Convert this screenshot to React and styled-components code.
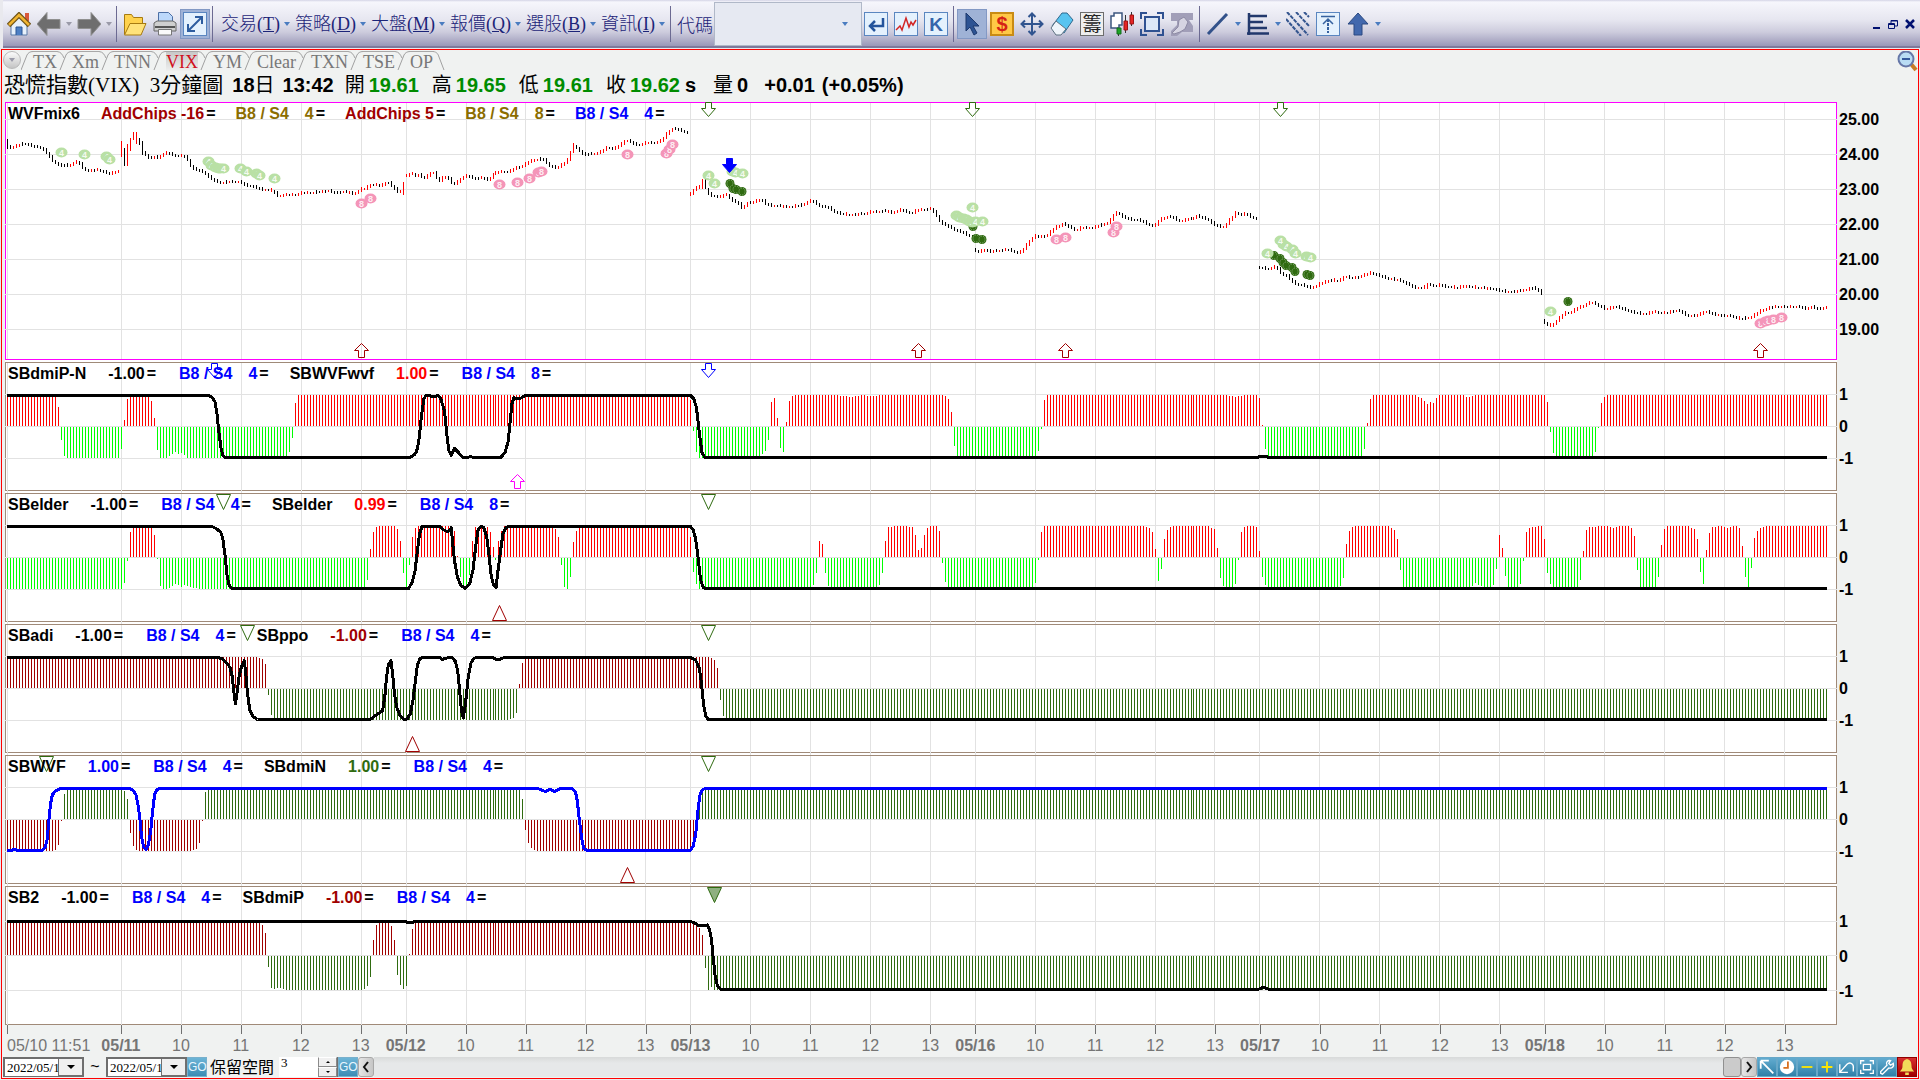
import React from "react";
import styled, { createGlobalStyle } from "styled-components";

const GlobalStyle = createGlobalStyle`
    * {
        box-sizing: border-box;
    }
    body {
        margin: 0;
        background: #e9e9ee;
        font-family: "Liberation Sans", "Noto Sans CJK TC", sans-serif;
    }
    button, input, select {
        margin: 0;
        padding: 0;
        border: 0;
        border-radius: 0;
        background: none;
        color: inherit;
        font: inherit;
    }
`

const RED = "#ff0000";
const LIME = "#00ff00";
const MAROON = "#a00000";
const FOREST = "#2f6b10";
const BLUE = "#0000ff";
const GOLD = "#8b6d00";
const GRID = "#e2e2e2";

/* ---------- toolbar ---------- */

const Toolbar = styled.header`
    display: flex;
    align-items: center;
    height: 48px;
    margin-left: 3px;
    padding-left: 4px;
    padding-right: 5px;
    background: linear-gradient(#d4d4e6 0, #f6f6fc 2px, #e6e6f0 20px, #cdccdd 32px, #9a98b8 46px, #7d7a9c 46px, #7d7a9c 48px);
`
const Separator = styled.div`
    width: 1px;
    height: 36px;
    margin: 0 6px 0 5px;
    background: #6c6a92;
`
const IconGroup = styled.div`
    display: flex;
    align-items: center;
    gap: 6px;
`
const IconButton = styled.button`
    display: flex;
    align-items: center;
    justify-content: center;
    width: ${props => props.$active ? 30 : 24}px;
    height: ${props => props.$active ? 30 : 24}px;
    margin: 0 ${props => props.$active ? -3 : 0}px;
    background: ${props => props.$active ? "#9fb2d6" : "none"};
    border: ${props => props.$active ? "1px solid #8298c4" : "0"};
`
const DropButton = styled.button`
    display: flex;
    justify-content: center;
    width: 16px;
    margin: 0 -6px;
`
const Caret = styled.span`
    border: 3px solid transparent;
    border-top: 4px solid ${props => props.$muted ? "#9a9aa8" : "#4a7cc0"};
    border-bottom: 0;
`
const Menus = styled.nav`
    display: flex;
    align-items: center;
    gap: 5px;
    margin-left: 2px;
`
const MenuButton = styled.button`
    display: flex;
    align-items: center;
    gap: 4px;
    color: #1c2478;
    font-family: "Liberation Serif", "Noto Sans CJK TC", serif;
    font-weight: 300;
    font-size: 18px;
    line-height: 24px;
    white-space: nowrap;
`
const CodeLabel = styled.label`
    color: #1c2478;
    font-family: "Noto Sans CJK TC", sans-serif;
    font-weight: 300;
    font-size: 18px;
    line-height: 24px;
    white-space: nowrap;
`
const CodeBox = styled.div`
    display: flex;
    align-items: center;
    width: 148px;
    height: 44px;
    margin: 0 2px 0 1px;
    padding-right: 14px;
    background: #e6e9f2;
    border: 1px solid #b0b8c8;
    input {
        flex: 1;
        min-width: 0;
        padding-left: 4px;
        font-size: 18px;
    }
`
const WindowButtons = styled.div`
    display: flex;
    align-items: center;
    gap: 7px;
    margin-left: auto;
    button {
        display: flex;
    }
`

/* ---------- chart window ---------- */

const Frame = styled.main`
    margin: 1px;
    border: 1px solid #ff0000;
    background: #f0f2f1;
`
const TabRow = styled.div`
    display: flex;
    align-items: flex-start;
    height: 21px;
    padding-left: 1px;
`
const TabMenu = styled.button`
    display: flex;
    align-items: center;
    justify-content: center;
    width: 18px;
    height: 18px;
    margin-top: 1px;
    border: 1px solid #b8b8b8;
    border-radius: 50%;
    background: linear-gradient(#fbfbfb, #c4c4c4);
`
const Tab = styled.button`
    height: 20px;
    margin-top: 1px;
    border-top: 1px solid #a8a8a8;
    background: ${props => props.$active ? "linear-gradient(#c8c8c8, #eeefee)" : "none"};
    color: ${props => props.$active ? "#d01020" : "#787878"};
    font-family: "Liberation Serif", serif;
    font-size: 18px;
    line-height: 20px;
`
const TabEdge = styled.svg`
    width: ${props => props.$first ? 12 : 15}px;
    height: 19px;
    margin-top: 1px;
`
const ZoomOut = styled.button`
    margin: 1px 0 0 auto;
    width: 21px;
    height: 21px;
`
const TitleRow = styled.div`
    display: flex;
    align-items: flex-start;
    height: 31px;
    padding-left: 2px;
    font-weight: bold;
    font-size: 20px;
    line-height: 29px;
    white-space: nowrap;
`
const Instrument = styled.h1`
    margin: 0 9px 0 0;
    font-family: "Liberation Serif", "Noto Sans CJK TC", serif;
    font-weight: normal;
    font-size: 21px;
    line-height: 29px;
`
const Stamp = styled.span`
    margin-right: ${props => props.$gap || 11}px;
    span {
        font-weight: normal;
    }
`
const Quote = styled.span`
    margin-right: ${props => props.$gap || 13}px;
    color: ${props => props.$color || "#008c00"};
    span {
        margin-right: 4px;
        color: #000000;
        font-weight: normal;
    }
`
const Charts = styled.div`
    padding-left: 3px;
`
const ChartRow = styled.section`
    display: grid;
    grid-template-columns: minmax(0, 1fr) 81px;
`
const PlotCell = styled.div`
    padding-bottom: ${props => props.$last ? 0 : 2}px;
    background: #ffffff;
`
const Plot = styled.div`
    display: grid;
    border: 1px solid ${props => props.$color};
`
const Drawing = styled.svg`
    grid-area: 1 / 1;
    display: block;
    width: 100%;
    height: ${props => props.$height}px;
    overflow: visible;
`
const Legend = styled.div`
    grid-area: 1 / 1;
    z-index: 1;
    display: flex;
    align-self: start;
    padding-left: 2px;
    font-weight: bold;
    font-size: 16px;
    line-height: 21px;
    white-space: nowrap;
`
const LegendText = styled.span`
    margin-right: ${props => props.$gap}px;
    color: ${props => props.$color || "#000000"};
`
const Equals = styled.span`
    margin-left: 2px;
    color: #000000;
`
const Scale = styled.div`
    padding: ${props => props.$top}px 0 0 2px;
    font-weight: bold;
    font-size: 16px;
    div {
        height: ${props => props.$step}px;
        line-height: ${props => props.$step}px;
    }
`
const TimeAxis = styled.div`
    display: flex;
    height: 32px;
    margin: 0 81px 0 2px;
    color: #757575;
    font-size: 16px;
`
const TimeSlot = styled.div`
    display: flex;
    flex-direction: column;
    flex: ${props => props.$bars} 1 0;
    min-width: 0;
    &:before {
        content: "";
        width: 1px;
        height: 9px;
        background: #707070;
    }
    span {
        display: flex;
        justify-content: ${props => props.$start ? "flex-start" : "center"};
        width: 0;
        line-height: 23px;
        white-space: nowrap;
        font-weight: ${props => props.$bold ? "bold" : "normal"};
    }
`

/* ---------- bottom bar ---------- */

const BottomBar = styled.footer`
    display: flex;
    align-items: flex-start;
    height: 21px;
    padding: 0 1px;
`
const DateBox = styled.div`
    display: flex;
    width: 81px;
    height: 20px;
    border: 1px solid #6e6e6e;
    border-width: 2px 1px 1px 2px;
    background: #ffffff;
    select {
        flex: 1;
        min-width: 0;
        padding-left: 2px;
        appearance: none;
        font-family: "Liberation Serif", serif;
        font-size: 13px;
        line-height: 16px;
    }
    button {
        display: flex;
        align-items: center;
        justify-content: center;
        width: 25px;
        background: #f0f0f0;
        border: 1px solid #707070;
        border-width: 0 1px 1px 1px;
    }
`
const BlackCaret = styled.span`
    border: ${props => props.$size}px solid transparent;
    border-top-color: ${props => props.$up ? "transparent" : "#000000"};
    border-bottom-color: ${props => props.$up ? "#000000" : "transparent"};
    border-top-width: ${props => props.$up ? 0 : props.$size}px;
    border-bottom-width: ${props => props.$up ? props.$size : 0}px;
`
const Tilde = styled.span`
    width: 22px;
    text-align: center;
    font-size: 16px;
    line-height: 20px;
`
const GoButton = styled.button`
    width: 20px;
    height: 20px;
    background: linear-gradient(#6cb4d6, #3c8cb4);
    border: 1px solid #78b0cc;
    color: #e8f6ff;
    font-size: 12px;
    line-height: 18px;
`
const SpaceLabel = styled.label`
    margin: 0 5px 0 3px;
    font-family: "Noto Sans CJK TC", sans-serif;
    font-size: 16px;
    line-height: 18px;
`
const SpaceInput = styled.input`
    width: 39px;
    height: 20px;
    padding: 0 2px 8px;
    background: #ffffff;
    font-family: "Liberation Serif", serif;
    font-size: 13px;
    line-height: 12px;
`
const Spinner = styled.div`
    display: flex;
    flex-direction: column;
    width: 20px;
    height: 20px;
    border-right: 1px solid #707070;
    button {
        display: flex;
        align-items: center;
        justify-content: center;
        height: 10px;
        background: #f0f0f0;
        border: 1px solid #8a8a8a;
        border-top-color: #ffffff;
    }
`
const ScrollButton = styled.button`
    display: flex;
    align-items: center;
    justify-content: center;
    width: 16px;
    height: 20px;
    border: 1px solid #a8a8a8;
    border-radius: 3px;
    background: linear-gradient(90deg, #e6e6e6, #c6c6c6);
`
const ScrollTrack = styled.div`
    display: flex;
    justify-content: flex-end;
    flex: 1;
    height: 20px;
    background: linear-gradient(#d8dada, #e6e8e9 6px);
`
const Thumb = styled.div`
    width: 18px;
    height: 20px;
    border: 1px solid #909090;
    border-radius: 3px;
    background: #cbcbcb;
`
const ToolButton = styled.button`
    display: flex;
    align-items: center;
    justify-content: center;
    width: 20px;
    height: 20px;
    background: ${props => props.$alert ? "linear-gradient(#d83030, #a00000)" : "linear-gradient(#62acd0, #3080a8)"};
    border: 1px solid ${props => props.$alert ? "#900000" : "#68a8c8"};
`

/* ---------- data ---------- */

// horizontal position of the n-th three-minute bar
const barX = n => Math.round(7.2 + 2.9957 * n) + 0.5;
const LAST_BAR = 607;

const DAYS = ["05/11", "05/12", "05/13", "05/16", "05/17", "05/18"];
const slots = [{ label: "05/10 11:51", bars: 38, start: true }];
DAYS.forEach((day, d) => {
    slots.push({ label: day, bars: 20, bold: true });
    ["10", "11", "12"].forEach(label => slots.push({ label, bars: 20 }));
    slots.push({ label: "13", bars: d === 5 ? 17.4 : 15 });
});

const gridBars = [];
slots.reduce((n, slot) => {
    gridBars.push(n);
    return n + slot.bars;
}, 0);

// [bar, y] per trading day
const prices = [
    [[0, 144], [1, 148], [2, 147], [4, 145], [6, 144], [7, 144], [9, 147], [11, 147], [13, 151], [14, 155], [15, 159], [16, 162], [18, 166], [20, 165], [21, 166], [22, 163], [24, 162], [25, 165], [26, 170], [28, 171], [30, 170], [32, 171], [34, 174], [36, 172], [37, 171]],
    [[38, 149], [41, 145], [43, 138], [45, 149], [46, 154], [48, 159], [49, 157], [51, 158], [52, 154], [54, 153], [56, 155], [57, 157], [58, 155], [60, 157], [61, 163], [62, 168], [64, 170], [66, 172], [67, 176], [69, 180], [72, 183], [74, 182], [78, 182], [79, 184], [81, 186], [83, 187], [85, 190], [87, 190], [89, 191], [90, 194], [91, 197], [92, 195], [96, 195], [98, 193], [102, 193], [104, 192], [108, 191], [110, 193], [112, 192], [114, 192], [116, 194], [118, 190], [119, 188], [120, 189], [121, 185], [123, 185], [125, 186], [127, 182], [128, 184], [129, 188], [131, 193], [132, 188]],
    [[133, 176], [134, 176], [135, 172], [136, 176], [138, 175], [139, 179], [140, 177], [142, 171], [143, 175], [144, 181], [145, 180], [146, 176], [147, 177], [148, 180], [149, 185], [150, 183], [152, 178], [153, 175], [155, 177], [156, 179], [158, 178], [161, 180], [162, 175], [164, 172], [168, 172], [170, 168], [172, 167], [174, 163], [176, 160], [179, 159], [180, 161], [181, 165], [183, 168], [185, 166], [187, 162], [188, 156], [189, 147], [190, 146], [192, 152], [193, 155], [195, 154], [197, 154], [199, 151], [201, 147], [203, 149], [205, 145], [207, 140], [209, 143], [211, 146], [213, 143], [217, 143], [219, 140], [220, 136], [221, 132], [223, 128], [224, 130], [226, 131], [227, 133]],
    [[228, 195], [229, 192], [230, 187], [231, 188], [232, 184], [233, 185], [234, 192], [235, 196], [237, 196], [238, 198], [240, 194], [241, 196], [242, 199], [243, 202], [244, 202], [245, 206], [246, 209], [247, 203], [250, 202], [251, 199], [252, 200], [254, 205], [256, 206], [262, 207], [266, 205], [268, 201], [269, 201], [271, 205], [273, 207], [275, 208], [276, 211], [277, 213], [281, 215], [286, 214], [289, 212], [294, 211], [296, 213], [298, 210], [300, 211], [302, 214], [304, 210], [309, 209], [310, 214], [311, 218], [312, 223], [314, 226], [316, 229], [318, 231], [320, 234], [322, 237]],
    [[323, 250], [325, 252], [326, 249], [328, 252], [330, 251], [334, 250], [338, 253], [339, 250], [340, 247], [341, 242], [342, 239], [343, 236], [345, 237], [347, 236], [349, 231], [350, 227], [351, 227], [353, 223], [354, 226], [356, 229], [357, 231], [358, 228], [362, 228], [364, 226], [366, 225], [368, 222], [369, 217], [370, 213], [371, 213], [373, 218], [376, 220], [378, 220], [380, 223], [383, 227], [384, 222], [386, 218], [388, 216], [390, 219], [392, 221], [394, 219], [396, 219], [398, 215], [399, 218], [401, 219], [403, 224], [406, 228], [407, 226], [408, 221], [409, 219], [410, 214], [411, 212], [412, 215], [414, 213], [415, 216], [417, 219]],
    [[418, 268], [419, 267], [421, 269], [424, 267], [425, 271], [426, 274], [428, 277], [429, 280], [430, 283], [432, 285], [434, 286], [435, 288], [436, 288], [438, 285], [440, 282], [442, 280], [445, 281], [447, 276], [449, 278], [452, 277], [453, 275], [455, 273], [457, 274], [460, 277], [461, 279], [465, 280], [467, 283], [469, 286], [470, 288], [473, 288], [474, 286], [475, 284], [477, 286], [479, 285], [481, 287], [485, 288], [486, 286], [488, 287], [492, 288], [497, 289], [499, 291], [502, 292], [505, 291], [507, 290], [509, 288], [511, 289], [512, 292]],
    [[513, 321], [514, 324], [515, 326], [516, 325], [518, 319], [519, 316], [520, 313], [522, 313], [523, 311], [524, 308], [526, 307], [527, 305], [529, 302], [530, 303], [533, 308], [534, 309], [537, 307], [540, 309], [542, 311], [544, 313], [546, 314], [549, 313], [550, 311], [552, 313], [554, 313], [556, 311], [559, 311], [560, 314], [562, 316], [564, 316], [566, 313], [567, 311], [569, 314], [571, 315], [574, 316], [576, 316], [578, 319], [581, 318], [583, 316], [585, 312], [587, 309], [589, 307], [595, 307], [598, 307], [601, 309], [602, 307], [604, 308], [605, 310], [607, 307]],
];

// unusually tall candles: [top, bottom, rising]
const tallCandles = {
    0: [139, 149, false], 38: [141, 157, true], 39: [148, 166, false], 40: [144, 166, true], 41: [138, 151, true],
    42: [132, 140, true], 43: [132, 144, true], 44: [138, 145, false], 45: [141, 155, false], 132: [182, 195, true],
    188: [151, 161, true], 189: [143, 153, true], 232: [179, 189, true], 233: [179, 189, false], 474: [283, 289, true],
    512: [289, 295, false],
};

const sample = (points, n) => {
    if (n <= points[0][0]) return points[0][1];
    for (let k = 1; k < points.length; k++) {
        const [x0, v0] = points[k - 1];
        const [x1, v1] = points[k];
        if (n <= x1) return v0 + (v1 - v0) * (n - x0) / (x1 - x0);
    }
    return points[points.length - 1][1];
};

const candlePaths = () => {
    const paths = { up: "", down: "" };
    prices.forEach(day => {
        const from = day[0][0];
        const to = day[day.length - 1][0];
        for (let n = from; n <= to; n++) {
            const before = sample(day, n - 0.5);
            const after = sample(day, n + 0.5);
            const extra = (n * 7) % 5 < 2 ? 2 : 1;
            let top = Math.round(Math.min(before, after) - extra);
            let bottom = Math.round(Math.max(before, after) + 1);
            let rising = Math.abs(after - before) < 0.6 ? (n * 11) % 7 < 3 : after < before;
            if (tallCandles[n]) [top, bottom, rising] = tallCandles[n];
            paths[rising ? "up" : "down"] += `M${barX(n)} ${top - 103}V${bottom - 103}`;
        }
    });
    return paths;
};

const dots = {
    four: [[61, 152], [84, 154], [106, 156], [109, 159], [208, 161], [211, 165], [215, 167], [218, 168], [220, 168], [223, 168], [240, 168], [246, 171], [256, 173], [259, 175], [274, 178], [708, 175], [714, 183], [732, 171], [735, 172], [742, 173], [956, 215], [959, 217], [963, 218], [966, 219], [969, 221], [972, 222], [975, 221], [982, 221], [972, 207], [1283, 244], [1280, 240], [1286, 246], [1292, 249], [1295, 253], [1306, 256], [1310, 257], [1267, 253], [1550, 311]],
    eight: [[361, 203], [370, 198], [499, 184], [517, 182], [529, 178], [538, 172], [541, 171], [627, 154], [666, 153], [669, 149], [672, 144], [1056, 239], [1065, 237], [1113, 232], [1116, 226], [1760, 323], [1765, 321], [1768, 320], [1773, 319], [1781, 317]],
    dark: [[730, 183], [733, 188], [736, 189], [742, 191], [973, 226], [976, 238], [982, 239], [1274, 255], [1280, 258], [1283, 262], [1286, 265], [1292, 267], [1295, 271], [1307, 274], [1310, 275], [1568, 301]],
};

const dmi = [[0, 1], [16, 1], [17, .6], [18, -.42], [19, -.92], [20, -1], [37, -1], [38, -.7], [39, .2], [40, .88], [41, 1], [47, 1], [48, .8], [49, .25], [50, -.75], [51, -1], [53, -1], [55, -.87], [56, -.8], [57, -.87], [58, -.83], [60, -1], [93, -1], [94, -.8], [95, -.35], [96, .75], [97, 1], [227, 1], [228, .85], [229, -.12], [230, -.8], [231, -1], [251, -1], [252, -.88], [253, -.78], [254, -.42], [255, .78], [256, .9], [257, .25], [258, -.68], [259, -.8], [260, .12], [261, .8], [262, .97], [263, 1], [276, 1], [282, .93], [285, 1], [288, .96], [292, 1], [312, 1], [313, .97], [314, .88], [315, .45], [316, -.62], [317, -1], [343, -1], [344, -.78], [345, -.07], [346, .83], [347, 1], [406, 1], [410, .94], [413, 1], [417, 1], [418, .9], [419, .03], [420, -.7], [421, -1], [451, -1], [452, -.92], [453, -.7], [454, .1], [455, .87], [456, 1], [470, 1], [472, .9], [474, .72], [475, .78], [476, .75], [477, .9], [478, 1], [486, 1], [487, .93], [488, .93], [490, 1], [513, 1], [514, .78], [515, -.15], [516, -.83], [517, -1], [529, -1], [530, -.82], [531, -.03], [532, .75], [533, .93], [534, 1], [607, 1]];
const dmiLine = [[7, 1], [209, 1], [212.5, .92], [215, .8], [217, .4], [219, -.2], [221, -.7], [223, -.95], [225, -1], [410, -1], [414, -.92], [416.5, -.82], [418.7, -.5], [421.5, .35], [424, .9], [426, 1], [430, 1], [432, .95], [435, .97], [438, 1], [440.5, .92], [444.5, .5], [447, -.3], [449, -.8], [451.3, -.93], [454.5, -.7], [463, -1], [468, -1], [470, -.97], [474, -1], [500.5, -1], [505, -.85], [508, -.5], [510, .1], [512, .75], [514, .93], [516, .9], [520, .9], [525, 1], [690.5, 1], [693.8, .9], [696.5, .6], [699.3, -.2], [702, -.85], [705, -1], [1258, -1], [1260, -.96], [1266, -.96], [1268, -1], [1827, -1]];

const elder = [[0, -1], [38, -1], [39, -.8], [40, -.1], [41, .82], [42, .98], [47, 1], [48, .92], [49, .7], [50, -.03], [51, -.9], [52, -1], [54, -.97], [56, -.83], [58, -.92], [59, -.86], [61, -.95], [64, -1], [119, -1], [120, -.7], [121, .25], [122, .8], [123, .97], [124, 1], [129, 1], [130, .9], [131, .5], [132, -.5], [133, -.93], [134, -.22], [135, .65], [136, .93], [137, 1], [147, 1], [149, .85], [150, .03], [151, -.6], [152, -1], [153, -.93], [154, -.55], [155, .5], [156, .97], [159, 1], [160, .97], [161, .8], [162, .32], [163, -.05], [164, .5], [165, .85], [166, 1], [182, 1], [183, .9], [184, .65], [185, -.22], [186, -.93], [187, -1], [188, -.6], [189, .48], [190, .85], [191, 1], [227, 1], [228, .65], [229, -.45], [230, -.83], [231, -1], [268, -1], [269, -.87], [270, -.48], [271, .5], [272, .43], [273, -.5], [274, -.9], [275, -1], [290, -1], [291, -.87], [292, -.5], [293, .52], [294, .97], [298, 1], [302, .97], [303, .72], [304, .23], [305, .3], [306, .72], [307, .93], [308, 1], [310, 1], [311, .85], [312, -.15], [313, -.77], [314, -1], [342, -1], [343, -.8], [344, -.05], [345, .82], [346, 1], [379, 1], [381, .93], [382, .82], [383, .25], [384, -.73], [385, -.35], [386, .58], [387, .88], [388, .97], [389, 1], [401, 1], [403, .9], [404, .3], [405, -.63], [406, -.9], [407, -1], [409, -1], [410, -.83], [411, -.05], [412, .8], [413, .98], [416, 1], [417, .97], [418, .2], [419, -.6], [420, -.87], [421, -1], [444, -1], [445, -.9], [446, -.63], [447, .42], [448, .85], [449, .97], [450, 1], [461, 1], [463, .87], [464, .58], [465, -.4], [466, -1], [488, -1], [490, -.8], [491, -.87], [494, -1], [495, -1], [496, -.87], [497, -.35], [498, .7], [499, .3], [500, -.58], [501, -.92], [502, -1], [504, -1], [505, -.85], [506, -.1], [507, .8], [508, .95], [512, 1], [513, .57], [514, -.5], [515, -.85], [516, -1], [523, -1], [524, -.93], [525, -.7], [526, .2], [527, .88], [528, .97], [534, 1], [536, .93], [538, 1], [541, 1], [542, .93], [543, .67], [544, -.38], [545, -.93], [546, -1], [549, -1], [550, -.97], [551, -.6], [552, .4], [553, .9], [554, 1], [561, 1], [563, .9], [564, .57], [565, -.45], [566, -.85], [567, .22], [568, .78], [569, .97], [572, 1], [574, .93], [576, 1], [577, 1], [578, .93], [579, .37], [580, -.6], [581, -.97], [582, -.32], [583, .62], [584, .83], [585, .95], [587, 1], [607, 1]];
const elderLine = [[7, 1], [212, 1], [217, .92], [221, .8], [223, .57], [225, .07], [227, -.57], [229, -.88], [232, -1], [408.5, -1], [412, -.82], [415, -.45], [417.3, .2], [419.7, .78], [422, 1], [440, 1], [443, .9], [447, .84], [449.5, .86], [451.3, .96], [452.7, .45], [454.5, -.1], [457.3, -.62], [460.5, -.88], [465, -1], [469.7, -.85], [473, -.4], [475.7, .35], [478, .88], [480.7, 1], [483.5, .98], [486.7, .67], [489, .08], [491.3, -.62], [493.6, -.88], [496, -.97], [497.7, -.5], [500.5, .2], [503, .78], [505.5, .94], [508, 1], [690.5, 1], [693.3, .88], [695.6, .6], [698.3, -.05], [700.6, -.73], [703.4, -.97], [705, -1], [1827, -1]];

const ppo = [[0, 1], [82, 1], [84, .97], [85, .92], [86, .77], [87, -.18], [88, -.85], [89, -1], [167, -1], [168, -.97], [169, -.93], [170, -.77], [171, .13], [172, .8], [173, .97], [174, 1], [234, 1], [235, .97], [236, .9], [237, .65], [238, -.35], [239, -.87], [240, -1], [607, -1]];
const adiLine = [[7, 1], [218, 1], [222.7, .95], [227, .82], [230, .68], [232.3, .38], [234, -.15], [235.5, -.5], [237.4, -.05], [239, .38], [241.5, .7], [244.3, .9], [245.6, .55], [247.5, -.15], [249.8, -.7], [253, -.9], [257.5, -1], [370, -1], [377.4, -.83], [382.5, -.72], [384.8, -.27], [386.6, .38], [388.4, .78], [391, .9], [392.6, .48], [394.4, -.15], [396.7, -.6], [400, -.88], [404, -1], [407.3, -.98], [410.5, -.8], [413, -.37], [415.5, .27], [417.4, .75], [419.7, .95], [422.4, 1], [439.4, 1], [442.5, .94], [446, .98], [450, 1], [452, 1], [455.5, .87], [457.8, .55], [459.6, -.05], [461.4, -.7], [463.3, -.95], [465.5, -.48], [468.3, .38], [471, .83], [474.3, .98], [477, 1], [493, 1], [496, .93], [500, .94], [504, 1], [690.5, 1], [695.6, .92], [699.3, .65], [701.5, .16], [703.4, -.48], [705.7, -.88], [708, -1], [1827, -1]];

const dmiN = [[0, -1], [15, -1], [16, -.97], [17, -.8], [18, -.03], [19, .82], [20, .97], [21, 1], [38, 1], [39, .9], [40, .63], [41, -.43], [42, -.83], [43, -.97], [44, -1], [61, -1], [62, -.97], [63, -.92], [64, -.73], [65, -.03], [66, .87], [67, 1], [170, 1], [171, .93], [172, .65], [173, -.32], [174, -.73], [175, -.9], [176, -.98], [177, -1], [228, -1], [229, -.9], [230, -.2], [231, .6], [232, 1], [607, 1]];
const wvfLine = [[7, -1], [12, -1], [14, -.96], [18, -1], [42, -1], [45, -.9], [47, -.67], [49, 0], [50.5, .5], [52.4, .8], [56, .93], [60.5, 1], [129.5, 1], [133, .95], [136, .8], [138, .47], [140, 0], [141.5, -.55], [143.5, -.88], [146, -.97], [148.3, -.83], [150.8, -.35], [152.7, .3], [154.6, .8], [156.5, .95], [160, 1], [538, 1], [543, .93], [545.8, .9], [549.7, .98], [554.5, .9], [560, .99], [572, 1], [575.4, .9], [577.3, .6], [579.3, 0], [581.7, -.6], [583.6, -.92], [587, -1], [690.3, -1], [693, -.87], [695.6, -.5], [698, .3], [700, .8], [702, .95], [705, 1], [1827, 1]];

const dmiP = [[0, 1], [83, 1], [84, .97], [85, .88], [86, .65], [87, -.33], [88, -.93], [89, -.97], [90, -.93], [92, -.98], [93, -1], [118, -1], [119, -.97], [120, -.88], [121, -.63], [122, .43], [123, .88], [124, .98], [127, 1], [128, .85], [129, .43], [130, -.57], [131, -.85], [132, -.98], [133, -.87], [134, .03], [135, .75], [136, .97], [137, 1], [229, 1], [230, .9], [231, .8], [232, .6], [233, -.35], [234, -1], [235, -.92], [236, -1], [607, -1]];
const sb2Line = [[7, 1], [405.5, 1], [408, .97], [412, .97], [415, 1], [691, 1], [695, .95], [698.5, .88], [703, .88], [707.7, .9], [709.6, .75], [711.6, .45], [713, 0], [715, -.57], [717.5, -.9], [721, -1], [1258, -1], [1262, -.95], [1265, -.95], [1269, -1], [1827, -1]];

const indicators = [
    {
        legend: [["SBdmiP-N", "#000000", "-1.00"], ["4"], ["SBWVFwvf", RED, "1.00"], ["8"]],
        bars: dmi, line: dmiLine, up: RED, down: LIME,
        marks: [["arrowDown", 214, BLUE], ["arrowDown", 708, BLUE], ["arrowUp", 517, "#ff00ff"]],
    },
    {
        legend: [["SBelder", "#000000", "-1.00"], ["4"], ["SBelder", RED, "0.99"], ["8"]],
        bars: elder, line: elderLine, up: RED, down: LIME,
        marks: [["triDown", 223, FOREST], ["triDown", 708, FOREST], ["triUp", 499, MAROON]],
    },
    {
        legend: [["SBadi", "#000000", "-1.00"], ["4"], ["SBppo", MAROON, "-1.00"], ["4"]],
        bars: ppo, line: adiLine, up: MAROON, down: FOREST,
        marks: [["triDown", 247, FOREST], ["triDown", 708, FOREST], ["triUp", 412, MAROON]],
    },
    {
        legend: [["SBWVF", BLUE, "1.00"], ["4"], ["SBdmiN", FOREST, "1.00"], ["4"]],
        bars: dmiN, line: wvfLine, up: FOREST, down: MAROON, stroke: BLUE,
        marks: [["triDown", 46, FOREST], ["triDown", 708, FOREST], ["triUp", 627, MAROON]],
    },
    {
        legend: [["SB2", "#000000", "-1.00"], ["4"], ["SBdmiP", MAROON, "-1.00"], ["4"]],
        bars: dmiP, line: sb2Line, up: MAROON, down: FOREST, tall: true,
        marks: [["triDown", 714, FOREST, "#8fb080"]],
    },
];

/* ---------- chart parts ---------- */

const shapes = {
    arrowDown: "M-3 0H3V6H7L0 14L-7 6H-3Z",
    arrowUp: "M0 0L7 7H3V14H-3V7H-7Z",
    triDown: "M-7 0H7L0 15Z",
    triUp: "M0 0L7 15H-7Z",
};

const Mark = ({ shape, x, y, color, fill = "none" }) => (
    <path d={shapes[shape]} transform={`translate(${x + 0.5} ${y + 0.5})`} fill={fill} stroke={color} />
)

const GridLines = ({ height, rows, overlap }) => (
    <g stroke={GRID} shapeRendering="crispEdges">
        {gridBars.map(n => <path key={n} d={`M${barX(n)} 0V${height + overlap}`} />)}
        {rows.map(y => <path key={y} d={`M5 ${y + 0.5}H1837`} />)}
    </g>
)

const Dot = ({ x, y, color, text }) => (
    <g>
        <ellipse cx={x + 0.5} cy={y - 102.5} rx="6" ry="5" fill={color} />
        <text x={x + 0.5} y={y - 99} textAnchor="middle" fontSize="9" fontWeight="bold" fill="#ffffff" fillOpacity="0.85">{text}</text>
    </g>
)

const PriceChart = () => {
    const candles = candlePaths();
    return (
        <ChartRow>
            <PlotCell>
                <Plot $color="#ff00ff">
                    <Drawing $height={256} viewBox="6 0 1830 256" preserveAspectRatio="none">
                        <GridLines height={256} rows={[16, 51, 86, 121, 156, 191, 226]} overlap={0} />
                        <g shapeRendering="crispEdges">
                            <path d={candles.up} stroke={RED} />
                            <path d={candles.down} stroke="#000000" />
                        </g>
                        {dots.dark.map(([x, y]) => (
                            <g key={`${x}-${y}`}>
                                <ellipse cx={x} cy={y - 102.5} rx="4.5" ry="4.5" fill="#2f6b10" />
                                <ellipse cx={x} cy={y - 102.5} rx="3" ry="3.5" fill="none" stroke="#8fb080" strokeDasharray="1 1" />
                            </g>
                        ))}
                        {dots.four.map(([x, y]) => <Dot key={`${x}-${y}`} x={x} y={y} color="#b9e0a5" text="4" />)}
                        {dots.eight.map(([x, y]) => <Dot key={`${x}-${y}`} x={x} y={y} color="#f495b8" text="8" />)}
                        {[708, 972, 1280].map(x => <Mark key={x} shape="arrowDown" x={x} y={-1} color={FOREST} />)}
                        {[361, 918, 1065, 1760].map(x => <Mark key={x} shape="arrowUp" x={x} y={240} color={MAROON} />)}
                        <Mark shape="arrowDown" x={729} y={55} color={BLUE} fill={BLUE} />
                    </Drawing>
                    <Legend>
                        <LegendText $gap={21}>WVFmix6</LegendText>
                        <LegendText $gap={20} $color={MAROON}>AddChips -16<Equals>=</Equals></LegendText>
                        <LegendText $gap={16} $color={GOLD}>B8 / S4</LegendText>
                        <LegendText $gap={20} $color={GOLD}>4<Equals>=</Equals></LegendText>
                        <LegendText $gap={20} $color={MAROON}>AddChips 5<Equals>=</Equals></LegendText>
                        <LegendText $gap={16} $color={GOLD}>B8 / S4</LegendText>
                        <LegendText $gap={20} $color={GOLD}>8<Equals>=</Equals></LegendText>
                        <LegendText $gap={16} $color={BLUE}>B8 / S4</LegendText>
                        <LegendText $gap={0} $color={BLUE}>4<Equals>=</Equals></LegendText>
                    </Legend>
                </Plot>
            </PlotCell>
            <Scale $top={0} $step={35}>
                {["25.00", "24.00", "23.00", "22.00", "21.00", "20.00", "19.00"].map(v => <div key={v}>{v}</div>)}
            </Scale>
        </ChartRow>
    )
}

const IndicatorChart = ({ legend, bars, line, up, down, stroke = "#000000", marks, tall }) => {
    const height = tall ? 137 : 127;
    const zero = tall ? 68 : 63;
    const rows = tall ? [34, 68, 103] : [31, 63, 95];
    const reach = tall ? 34 : 31;
    let upPath = "";
    let downPath = "";
    for (let n = 0; n <= LAST_BAR; n++) {
        const size = Math.round(sample(bars, n) * reach);
        if (size > 0) upPath += `M${barX(n)} ${zero}V${zero - size}`;
        if (size < 0) downPath += `M${barX(n)} ${zero + 1}V${zero + 1 - size}`;
    }
    const points = line.map(([x, v]) => `${x},${(zero + 0.5 - v * reach).toFixed(1)}`).join(" ");
    return (
        <ChartRow>
            <PlotCell $last={tall}>
                <Plot $color="#a08a78">
                    <Drawing $height={height} viewBox={`6 0 1830 ${height}`} preserveAspectRatio="none">
                        <GridLines height={height} rows={rows} overlap={tall ? 1 : 3} />
                        <g shapeRendering="crispEdges">
                            <path d={upPath} stroke={up} />
                            <path d={downPath} stroke={down} />
                            <polyline points={points} fill="none" stroke={stroke} strokeWidth="3" strokeLinejoin="round" />
                        </g>
                        {marks.map(([shape, x, color, fill]) => (
                            <Mark key={x} shape={shape} x={x} y={shape.endsWith("Up") ? 111 : 0} color={color} fill={fill} />
                        ))}
                    </Drawing>
                    <Legend>
                        {legend.map(([name, color, value], k) => value
                            ? <React.Fragment key={k}>
                                <LegendText $gap={22}>{name}</LegendText>
                                <LegendText $gap={23} $color={color}>{value}<Equals>=</Equals></LegendText>
                            </React.Fragment>
                            : <React.Fragment key={k}>
                                <LegendText $gap={16} $color={BLUE}>B8 / S4</LegendText>
                                <LegendText $gap={21} $color={BLUE}>{name}<Equals>=</Equals></LegendText>
                            </React.Fragment>
                        )}
                    </Legend>
                </Plot>
            </PlotCell>
            <Scale $top={tall ? 18 : 17} $step={tall ? 35 : 32}>
                <div>1</div>
                <div>0</div>
                <div>-1</div>
            </Scale>
        </ChartRow>
    )
}

/* ---------- icons ---------- */

const Icon = ({ size = 24, children }) => (
    <svg width={size} height={size} viewBox="0 0 24 24" fill="none">{children}</svg>
)

const Tile = ({ children }) => (
    <Icon>
        <rect x="0.5" y="0.5" width="23" height="23" fill="#e4f1fd" stroke="#5a86c0" />
        {children}
    </Icon>
)

const HomeIcon = () => (
    <Icon>
        <path d="M18 1h4v8h-4z" fill="#d8573a" />
        <path d="M4 12v11h16V12l-8-8z" fill="#e8f1fb" stroke="#5b7ba8" />
        <path d="M9 23v-8h6v8" fill="#4d7fc4" stroke="#2d5793" />
        <path d="M1.500 13.500L12 3l10.500 10.500" stroke="#6d5318" strokeWidth="5" />
        <path d="M2 13L12 3l10 10" stroke="#f0b431" strokeWidth="2.500" />
    </Icon>
)
const BackIcon = () => <Icon><path d="M0 12L10 0.500v7h13v9H10v7z" fill="#6e6e6e" stroke="#909090" /></Icon>
const ForwardIcon = () => <Icon><path d="M24 12L14 0.500v7H1v9h13v7z" fill="#6e6e6e" stroke="#909090" /></Icon>
const FolderIcon = () => (
    <Icon>
        <path d="M1.500 22V2.500h7l2 3h9V11" fill="#ffd24d" stroke="#a77a10" />
        <path d="M1.500 23L7 11.500h16L18 23z" fill="#ffe27a" stroke="#a77a10" />
    </Icon>
)
const PrinterIcon = () => (
    <Icon>
        <path d="M5.500 11V0.500h10l4 4V11" fill="#bcd8fb" stroke="#4d6fa5" />
        <path d="M1 11l3-2h16l3 2v8H1z" fill="#cfcfcf" stroke="#666666" />
        <path d="M2 15h20" stroke="#555555" strokeWidth="2" />
        <path d="M5.500 17.500h13V23h-13z" fill="#fafafa" stroke="#777777" />
    </Icon>
)
const ExpandIcon = () => (
    <Tile>
        <path d="M6 18L18 6M12 5h7v7M5 12v7h7" stroke="#2e5d9f" strokeWidth="2" />
    </Tile>
)
const EnterIcon = () => <Tile><path d="M19 6v8H6m5-5l-5 5 5 5" stroke="#24549c" strokeWidth="2.500" /></Tile>
const TrendIcon = () => <Tile><path d="M2 18l4-4 2 4 4-12 3 9 2-5 2 3 3-5" stroke="#d22525" strokeWidth="1.500" /></Tile>
const KIcon = () => <Tile><text x="12" y="19" textAnchor="middle" fontSize="19" fontWeight="bold" fill="#3465ab">K</text></Tile>
const PointerIcon = () => <Icon><path d="M6 1v18l4-4 4 8 3-2-4-7h6z" fill="#2d5393" stroke="#1d396d" /></Icon>
const DollarIcon = () => (
    <Icon>
        <rect x="1" y="1" width="22" height="22" fill="#ffc846" stroke="#c98b14" strokeWidth="2" />
        <text x="12" y="19" textAnchor="middle" fontSize="20" fontWeight="bold" fill="#d52315">$</text>
    </Icon>
)
const MoveIcon = () => <Icon><path d="M12 1v22M1 12h22M8.500 5L12 1.500 15.500 5M8.500 19l3.500 3.500 3.500-3.500M5 8.500L1.500 12 5 15.500M19 8.500l3.500 3.500-3.500 3.500" stroke="#31548f" strokeWidth="2" /></Icon>
const EraserIcon = () => (
    <Icon>
        <path d="M2 14L12 1l5 0 6 7-9 13z" fill="#58c4f0" stroke="#31688c" />
        <path d="M1 16l5-7 10 8-5 6H6z" fill="#eef4fa" stroke="#5d7080" />
    </Icon>
)
const ChipsIcon = () => (
    <Icon>
        <rect x="0.500" y="0.500" width="23" height="23" fill="#eeeeee" stroke="#6d6d6d" />
        <text x="12" y="19" textAnchor="middle" fontSize="19" fill="#222222">籌</text>
    </Icon>
)
const CandlesIcon = () => (
    <Icon>
        <path d="M8.500 12v12M15.500 3v18M21.500 0v14" stroke="#333333" />
        <path d="M1 4h3V1h8v12H9v3H1z" fill="#ffffff" stroke="#3d577f" strokeWidth="1.500" />
        <path d="M7 16h4v6H7z" fill="#1da526" stroke="#126d18" />
        <path d="M14 9h3.500v9H14zM20 3h3.500v9H20z" fill="#e52525" stroke="#9b1515" />
    </Icon>
)
const FrameIcon = () => (
    <Icon>
        <path d="M5 5h14v14H5z" fill="#dbe7f7" stroke="#2f5191" strokeWidth="2" />
        <path d="M1 7V1h6M17 1h6v6M23 17v6h-6M7 23H1v-6" stroke="#2f5191" strokeWidth="2" />
    </Icon>
)
const CleanIcon = () => (
    <Icon>
        <path d="M1 1h22v7h-4l4 6v6H12l-5 4H1v-5l6-6V9H1z" fill="#a19eb8" />
        <path d="M14 5l4 5-3 7-5 3-6 2-2-1 6-6 1-7z" fill="#d6d4e2" stroke="#8d8aa4" />
    </Icon>
)
const LineIcon = () => <Icon><path d="M2 22L21 2" stroke="#32518a" strokeWidth="3" /></Icon>
const FibIcon = () => <Icon><path d="M3 1v22M3 4h18M3 10h14M3 16h18M1 21.500h22" stroke="#22386c" strokeWidth="2.500" /></Icon>
const HatchIcon = () => <Icon><path d="M0 7l15 17M1 0l21 23M10 0l13 14M18 0l5 5" stroke="#34558f" strokeWidth="2" strokeDasharray="4 1" /></Icon>
const DottedUpIcon = () => <Tile><path d="M5 4.500h14" stroke="#35619f" strokeWidth="1.500" /><path d="M12 7v14" stroke="#35619f" strokeWidth="2" strokeDasharray="3 1" /><path d="M7 12l5-5 5 5" stroke="#35619f" strokeWidth="1.500" /></Tile>
const UpIcon = () => <Icon><path d="M12 1l10 11h-6v11H8V12H2z" fill="#4268ad" stroke="#2a4981" /></Icon>

const Magnifier = () => (
    <svg width="21" height="21" viewBox="0 0 21 21">
        <path d="M14 13l5 6" stroke="#c87c26" strokeWidth="4" />
        <circle cx="9" cy="8" r="7.500" fill="#b9dcf4" stroke="#6677a8" strokeWidth="2" />
        <path d="M5 8h8" stroke="#35589c" strokeWidth="2" />
    </svg>
)

const Edge = ({ first, last }) => (
    <TabEdge $first={first} viewBox={first ? "3 0 12 19" : "0 0 15 19"} fill="none" stroke="#a0a0a0">
        {!first && <path d={last ? "M0 0.500C4 1 5 3 6 6L11 19" : "M0 0.500C4 1 5 3 7 7"} />}
        {!last && <path d="M3 19L9 4C10 2 12 0.500 15 0.500" />}
    </TabEdge>
)

const menus = [["交易", "T"], ["策略", "D"], ["大盤", "M"], ["報價", "Q"], ["選股", "B"], ["資訊", "I"]];
const tabs = ["TX", "Xm", "TNN", "VIX", "YM", "Clear", "TXN", "TSE", "OP"];

const tools = [
    ["指標", <path key="a" d="M3 3h9M3 3v9M3 3l14 14" stroke="#fff" strokeWidth="2" />],
    ["時間", <g key="a"><circle cx="10" cy="10" r="8" fill="#fff" /><path d="M11 4v7H6" stroke="#d87020" strokeWidth="2" /></g>],
    ["縮小", <path key="a" d="M4 10h12" stroke="#ffe600" strokeWidth="2" />],
    ["放大", <path key="a" d="M4 10h12M10 4v12" stroke="#ffe600" strokeWidth="2" />],
    ["還原", <path key="a" d="M2 7v9h9M2 16L10 7C13 4 18 6 17 12v3" stroke="#fff" strokeWidth="1.500" />],
    ["全圖", <path key="a" d="M3 7V3h4M13 3h4v4M17 13v4h-4M7 17H3v-4M6 7h8v6H6z" stroke="#fff" strokeWidth="1.500" />],
    ["設定", <path key="a" d="M3 17l2 1 7-7c4 1 6-2 5-5l-3 2-2-2 2-3c-3-1-6 2-4 5l-7 7z" stroke="#fff" strokeWidth="1.500" />],
];

const TopBar = () => (
    <Toolbar>
        <IconGroup>
            <IconButton aria-label="首頁"><HomeIcon /></IconButton>
            <IconButton aria-label="上一頁"><BackIcon /></IconButton>
            <DropButton aria-label="上一頁選單"><Caret $muted /></DropButton>
            <IconButton aria-label="下一頁"><ForwardIcon /></IconButton>
            <DropButton aria-label="下一頁選單"><Caret $muted /></DropButton>
        </IconGroup>
        <Separator />
        <IconGroup>
            <IconButton aria-label="開啟"><FolderIcon /></IconButton>
            <IconButton aria-label="列印"><PrinterIcon /></IconButton>
            <IconButton aria-label="展開" $active><ExpandIcon /></IconButton>
        </IconGroup>
        <Separator />
        <Menus>
            {menus.map(([name, key]) => (
                <MenuButton key={key}><span>{name}(<u>{key}</u>)</span><Caret /></MenuButton>
            ))}
        </Menus>
        <Separator />
        <CodeLabel htmlFor="code">代碼</CodeLabel>
        <CodeBox>
            <input id="code" type="text" />
            <DropButton aria-label="代碼選單"><Caret /></DropButton>
        </CodeBox>
        <IconGroup>
            <IconButton aria-label="確定"><EnterIcon /></IconButton>
            <IconButton aria-label="走勢"><TrendIcon /></IconButton>
            <IconButton aria-label="K線"><KIcon /></IconButton>
        </IconGroup>
        <Separator />
        <IconGroup>
            <IconButton aria-label="指標" $active><PointerIcon /></IconButton>
            <IconButton aria-label="下單"><DollarIcon /></IconButton>
            <IconButton aria-label="移動"><MoveIcon /></IconButton>
            <IconButton aria-label="清除"><EraserIcon /></IconButton>
            <IconButton aria-label="籌碼"><ChipsIcon /></IconButton>
            <IconButton aria-label="線圖"><CandlesIcon /></IconButton>
            <IconButton aria-label="選取"><FrameIcon /></IconButton>
            <IconButton aria-label="復原" disabled><CleanIcon /></IconButton>
        </IconGroup>
        <Separator />
        <IconGroup>
            <IconButton aria-label="畫線"><LineIcon /></IconButton>
            <DropButton aria-label="畫線選單"><Caret /></DropButton>
            <IconButton aria-label="黃金分割"><FibIcon /></IconButton>
            <DropButton aria-label="黃金分割選單"><Caret /></DropButton>
            <IconButton aria-label="平行線"><HatchIcon /></IconButton>
            <IconButton aria-label="標示"><DottedUpIcon /></IconButton>
            <IconButton aria-label="箭頭"><UpIcon /></IconButton>
            <DropButton aria-label="箭頭選單"><Caret /></DropButton>
        </IconGroup>
        <WindowButtons>
            <button aria-label="最小化"><svg width="9" height="11"><path d="M1 9h7" stroke="#001070" strokeWidth="2" /></svg></button>
            <button aria-label="還原視窗">
                <svg width="10" height="11" fill="none" stroke="#001070"><path d="M3 4V1.500h6.500V7H7M0.500 4.500h6v5h-6zM0 5.500h7M3 2h6" /></svg>
            </button>
            <button aria-label="關閉"><svg width="10" height="11"><path d="M1 1l8 8M9 1L1 9" stroke="#001070" strokeWidth="2.500" /></svg></button>
        </WindowButtons>
    </Toolbar>
)

const BottomTools = () => (
    <BottomBar>
        <DateBox>
            <select aria-label="開始日期"><option>2022/05/10</option></select>
            <button aria-label="選擇開始日期"><BlackCaret $size={4} /></button>
        </DateBox>
        <Tilde>~</Tilde>
        <DateBox>
            <select aria-label="結束日期"><option>2022/05/1</option></select>
            <button aria-label="選擇結束日期"><BlackCaret $size={4} /></button>
        </DateBox>
        <GoButton>GO</GoButton>
        <SpaceLabel htmlFor="space">保留空間</SpaceLabel>
        <SpaceInput id="space" type="text" defaultValue="3" />
        <Spinner>
            <button aria-label="增加"><BlackCaret $size={2} $up /></button>
            <button aria-label="減少"><BlackCaret $size={2} /></button>
        </Spinner>
        <GoButton>GO</GoButton>
        <ScrollButton aria-label="向左捲動">
            <svg width="8" height="12" fill="none"><path d="M6 1L2 6l4 5" stroke="#111" strokeWidth="2" /></svg>
        </ScrollButton>
        <ScrollTrack><Thumb /></ScrollTrack>
        <ScrollButton aria-label="向右捲動">
            <svg width="8" height="12" fill="none"><path d="M2 1l4 5-4 5" stroke="#111" strokeWidth="2" /></svg>
        </ScrollButton>
        {tools.map(([name, drawing]) => (
            <ToolButton key={name} aria-label={name}>
                <svg width="18" height="18" viewBox="0 0 20 20" fill="none">{drawing}</svg>
            </ToolButton>
        ))}
        <ToolButton aria-label="警示" $alert>
            <svg width="18" height="18" viewBox="0 0 20 20"><path d="M10 1c4 1 5 4 5 8 0 3 1 4 3 6H2c2-2 3-3 3-6 0-4 1-7 5-8zM8 16h4v3H8z" fill="#f2dc5a" /></svg>
        </ToolButton>
    </BottomBar>
)

const App = () => (
    <>
        <GlobalStyle />
        <TopBar />
        <Frame>
            <TabRow>
                <TabMenu aria-label="頁籤選單"><Caret $muted /></TabMenu>
                {tabs.map((tab, k) => (
                    <React.Fragment key={tab}>
                        <Edge first={k === 0} />
                        <Tab $active={tab === "VIX"}>{tab}</Tab>
                    </React.Fragment>
                ))}
                <Edge last />
                <ZoomOut aria-label="縮小"><Magnifier /></ZoomOut>
            </TabRow>
            <TitleRow>
                <Instrument>恐慌指數(VIX)&nbsp; 3分鐘圖</Instrument>
                <Stamp $gap={8}>18<span>日</span></Stamp>
                <Stamp>13:42</Stamp>
                <Quote><span>開</span>19.61</Quote>
                <Quote><span>高</span>19.65</Quote>
                <Quote><span>低</span>19.61</Quote>
                <Quote $gap={5}><span>收</span>19.62</Quote>
                <Stamp $gap={17}>s</Stamp>
                <Quote $gap={16} $color="#000000"><span>量</span>0</Quote>
                <Stamp $gap={7}>+0.01</Stamp>
                <Stamp>(+0.05%)</Stamp>
            </TitleRow>
            <Charts>
                <PriceChart />
                {indicators.map((indicator, k) => <IndicatorChart key={k} {...indicator} />)}
                <TimeAxis>
                    {slots.map((slot, k) => (
                        <TimeSlot key={k} $bars={slot.bars} $bold={slot.bold} $start={slot.start}>
                            <span>{slot.label}</span>
                        </TimeSlot>
                    ))}
                </TimeAxis>
            </Charts>
            <BottomTools />
        </Frame>
    </>
)

export default App
